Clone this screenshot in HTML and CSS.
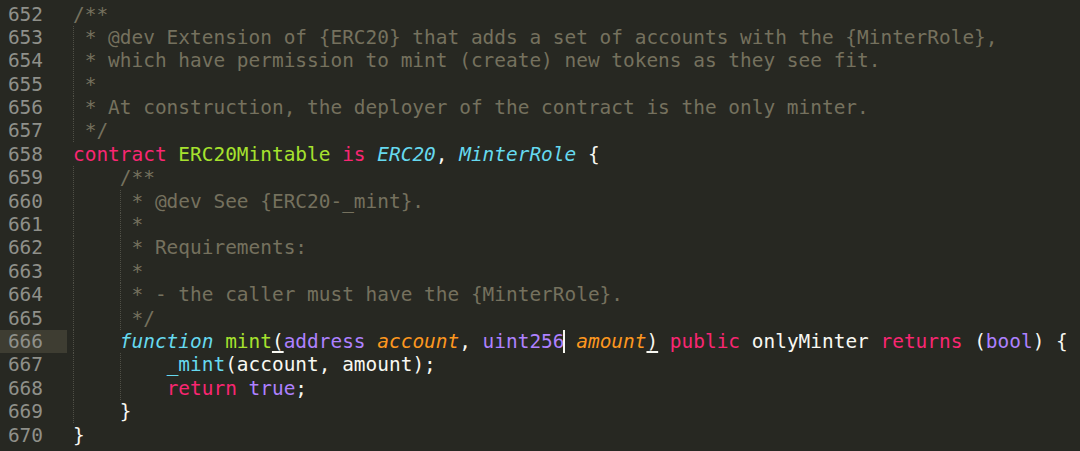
FILE: index.html
```html
<!DOCTYPE html>
<html>
<head>
<meta charset="utf-8">
<link rel="stylesheet" href="styles.css">
</head>
<body>
<div class="editor">
  <div class="line"><span class="ln">652</span><span class="code"><span class="cm">/**</span></span></div>
  <div class="line"><span class="ln">653</span><span class="code g1"><span class="cm"> * @dev Extension of {ERC20} that adds a set of accounts with the {MinterRole},</span></span></div>
  <div class="line"><span class="ln">654</span><span class="code g1"><span class="cm"> * which have permission to mint (create) new tokens as they see fit.</span></span></div>
  <div class="line"><span class="ln">655</span><span class="code g1"><span class="cm"> *</span></span></div>
  <div class="line"><span class="ln">656</span><span class="code g1"><span class="cm"> * At construction, the deployer of the contract is the only minter.</span></span></div>
  <div class="line"><span class="ln">657</span><span class="code g1"><span class="cm"> */</span></span></div>
  <div class="line"><span class="ln">658</span><span class="code"><span class="kw">contract</span> <span class="ent">ERC20Mintable</span> <span class="kw">is</span> <span class="typ">ERC20</span>, <span class="typ">MinterRole</span> {</span></div>
  <div class="line"><span class="ln">659</span><span class="code g1">    <span class="cm">/**</span></span></div>
  <div class="line"><span class="ln">660</span><span class="code g2">    <span class="cm"> * @dev See {ERC20-_mint}.</span></span></div>
  <div class="line"><span class="ln">661</span><span class="code g2">    <span class="cm"> *</span></span></div>
  <div class="line"><span class="ln">662</span><span class="code g2">    <span class="cm"> * Requirements:</span></span></div>
  <div class="line"><span class="ln">663</span><span class="code g2">    <span class="cm"> *</span></span></div>
  <div class="line"><span class="ln">664</span><span class="code g2">    <span class="cm"> * - the caller must have the {MinterRole}.</span></span></div>
  <div class="line"><span class="ln">665</span><span class="code g2">    <span class="cm"> */</span></span></div>
  <div class="line current"><span class="ln">666</span><span class="code g1">    <span class="typ">function</span> <span class="ent">mint</span><span class="match">(</span><span class="num">address</span> <span class="arg">account</span>, <span class="num">uint256</span><span class="caret"></span> <span class="arg">amount</span><span class="match">)</span> <span class="kw">public</span> onlyMinter <span class="kw">returns</span> (<span class="num">bool</span>) {</span></div>
  <div class="line"><span class="ln">667</span><span class="code g2">        <span class="fn">_mint</span>(account, amount);</span></div>
  <div class="line"><span class="ln">668</span><span class="code g2">        <span class="kw">return</span> <span class="num">true</span>;</span></div>
  <div class="line"><span class="ln">669</span><span class="code g1">    }</span></div>
  <div class="line"><span class="ln">670</span><span class="code">}</span></div>
  <div class="line"><span class="ln">671</span><span class="code"></span></div>
</div>
</body>
</html>
```
FILE: styles.css
```css
html, body {
  margin: 0;
  padding: 0;
  background: #272822;
  height: 100%;
  overflow: hidden;
}

.editor {
  display: flex;
  flex-direction: column;
  padding-top: 2.5px;
  font-family: "DejaVu Sans Mono", monospace;
  font-size: 19.45px;
  line-height: 23.4px;
  color: #f8f8f2;
}

.line {
  display: flex;
  height: 23.4px;
  flex: none;
}

.ln {
  flex: none;
  width: 67px;
  box-sizing: border-box;
  padding-right: 24px;
  text-align: right;
  color: #8f908a;
}

.current .ln {
  background: #3e3d32;
}

.code {
  flex: 1;
  padding-left: 6px;
  white-space: pre;
  position: relative;
}

.g1 {
  background-image: repeating-linear-gradient(to bottom, #4f4f46 0 1px, transparent 1px 2px);
  background-size: 1px 100%;
  background-repeat: no-repeat;
  background-position: 6px 0;
}

.g2 {
  background-image:
    repeating-linear-gradient(to bottom, #4f4f46 0 1px, transparent 1px 2px),
    repeating-linear-gradient(to bottom, #4f4f46 0 1px, transparent 1px 2px);
  background-size: 1px 100%, 1px 100%;
  background-repeat: no-repeat;
  background-position: 6px 0, 53px 0;
}

.cm { color: #75715e; }
.kw { color: #f92672; }
.ent { color: #a6e22e; }
.typ { color: #66d9ef; font-style: italic; }
.fn { color: #66d9ef; }
.num { color: #ae81ff; }
.arg { color: #fd971f; font-style: italic; }

.match {
  text-decoration: underline;
  text-decoration-thickness: 1.5px;
  text-underline-offset: 3px;
}

.caret {
  position: relative;
  display: inline-block;
  width: 0;
  height: 23.4px;
  vertical-align: top;
}

.caret::after {
  content: "";
  position: absolute;
  left: -2px;
  top: 0;
  width: 2px;
  height: 23px;
  background: #f8f8f0;
}
```
